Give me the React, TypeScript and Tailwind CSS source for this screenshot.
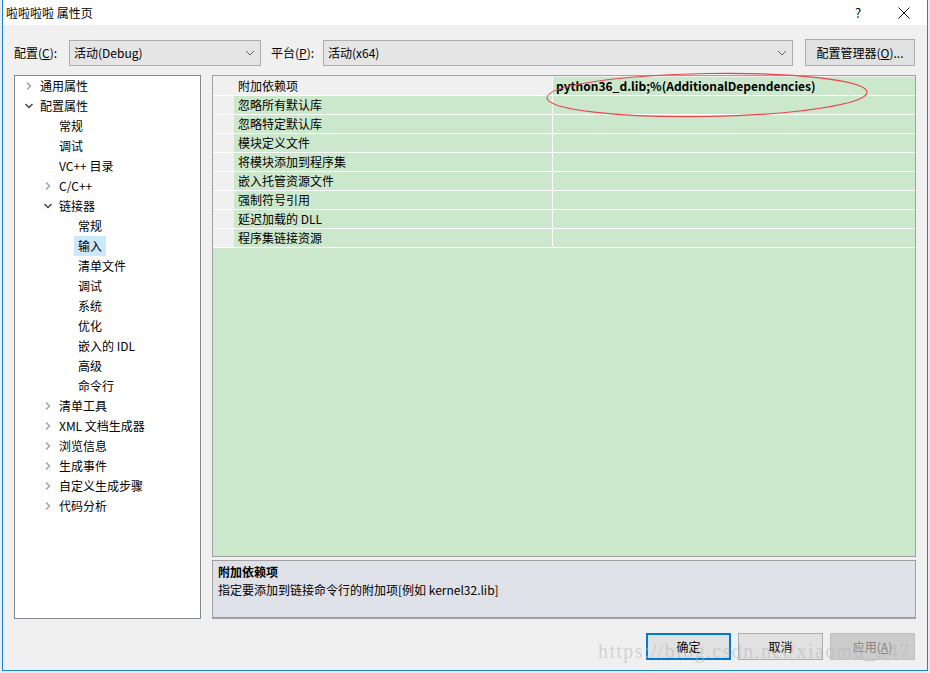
import React from 'react';

type TreeNode = {
    label: string;
    level: number;
    expander?: 'right' | 'down';
    selected?: boolean;
};

const treeNodes: TreeNode[] = [
    { label: '通用属性', level: 0, expander: 'right' },
    { label: '配置属性', level: 0, expander: 'down' },
    { label: '常规', level: 1 },
    { label: '调试', level: 1 },
    { label: 'VC++ 目录', level: 1 },
    { label: 'C/C++', level: 1, expander: 'right' },
    { label: '链接器', level: 1, expander: 'down' },
    { label: '常规', level: 2 },
    { label: '输入', level: 2, selected: true },
    { label: '清单文件', level: 2 },
    { label: '调试', level: 2 },
    { label: '系统', level: 2 },
    { label: '优化', level: 2 },
    { label: '嵌入的 IDL', level: 2 },
    { label: '高级', level: 2 },
    { label: '命令行', level: 2 },
    { label: '清单工具', level: 1, expander: 'right' },
    { label: 'XML 文档生成器', level: 1, expander: 'right' },
    { label: '浏览信息', level: 1, expander: 'right' },
    { label: '生成事件', level: 1, expander: 'right' },
    { label: '自定义生成步骤', level: 1, expander: 'right' },
    { label: '代码分析', level: 1, expander: 'right' },
];

const gridRows = [
    { name: '附加依赖项', value: 'python36_d.lib;%(AdditionalDependencies)' },
    { name: '忽略所有默认库', value: '' },
    { name: '忽略特定默认库', value: '' },
    { name: '模块定义文件', value: '' },
    { name: '将模块添加到程序集', value: '' },
    { name: '嵌入托管资源文件', value: '' },
    { name: '强制符号引用', value: '' },
    { name: '延迟加载的 DLL', value: '' },
    { name: '程序集链接资源', value: '' },
];

const paddings = ['pl-[5px]', 'pl-[24px]', 'pl-[43px]'];

const ChevronRight = () => (
    <svg width="8" height="10" viewBox="0 0 8 10">
        <path d="M2 1.5 L5.5 5 L2 8.5" fill="none" stroke="#a6a6a6" strokeWidth="1.6" />
    </svg>
);

const ChevronDown = () => (
    <svg width="10" height="8" viewBox="0 0 10 8">
        <path d="M1.5 2 L5 5.5 L8.5 2" fill="none" stroke="#404040" strokeWidth="1.4" />
    </svg>
);

const ComboChevron = () => (
    <svg width="10" height="6" viewBox="0 0 10 6">
        <path d="M1 1 L5 5 L9 1" fill="none" stroke="#606060" strokeWidth="1" />
    </svg>
);

const ComboBox: React.FC<{ text: string; className: string }> = ({ text, className }) => (
    <div className={`h-[26px] flex items-center justify-between bg-[#e5e5e5] border border-[#adadad] pl-[4px] pr-[5px] ${className}`}>
        <span>{text}</span>
        <ComboChevron />
    </div>
);

export default function App() {
    return (
        <div
            className="relative w-[930px] h-[673px] bg-[#e6edf2] text-[12px] text-black overflow-hidden"
            style={{ fontFamily: '"Noto Sans CJK SC", "Noto Sans", sans-serif' }}
        >
            <div className="ml-[2px] w-[926px] h-[671px] flex flex-col border-x border-b border-[#1883d7]">
                {/* title bar */}
                <div className="h-[25px] bg-white flex items-center justify-between">
                    <span className="pl-[3px] leading-none">啦啦啦啦 属性页</span>
                    <div className="flex h-full">
                        <div className="w-[46px] flex items-center justify-center text-[13px]">?</div>
                        <div className="w-[46px] flex items-center justify-center">
                            <svg width="12" height="12" viewBox="0 0 12 12">
                                <path d="M0.5 0.5 L11.5 11.5 M11.5 0.5 L0.5 11.5" stroke="#111" strokeWidth="1" />
                            </svg>
                        </div>
                    </div>
                </div>

                {/* body */}
                <div className="flex-1 bg-[#f0f0f0] flex flex-col pt-[14px] pl-[11px] pr-[11px] pb-[10px]">
                    {/* config row */}
                    <div className="h-[27px] flex items-center">
                        <span className="w-[55px]">配置(<span className="underline">C</span>):</span>
                        <ComboBox text="活动(Debug)" className="w-[192px]" />
                        <span className="ml-[10px] w-[52px]">平台(<span className="underline">P</span>):</span>
                        <ComboBox text="活动(x64)" className="w-[470px]" />
                        <div className="ml-[12px] w-[110px] h-[27px] flex items-center justify-center bg-[#e1e1e1] border border-[#adadad]">
                            配置管理器(<span className="underline">O</span>)...
                        </div>
                    </div>

                    {/* main area */}
                    <div className="mt-[9px] h-[544px] flex">
                        {/* tree */}
                        <div className="w-[187px] h-full bg-white border border-[#828790]">
                            {treeNodes.map((n, i) => (
                                <div key={i} className={`h-[20px] flex items-center ${paddings[n.level]}`}>
                                    <span className="w-[17px] flex items-center justify-center">
                                        {n.expander === 'right' && <ChevronRight />}
                                        {n.expander === 'down' && <ChevronDown />}
                                    </span>
                                    <span
                                        className={`ml-[-1px] px-[4px] h-[20px] leading-[20px] ${n.selected ? 'bg-[#cce8ff]' : ''}`}
                                    >
                                        {n.label}
                                    </span>
                                </div>
                            ))}
                        </div>

                        {/* property panel */}
                        <div className="ml-[11px] w-[704px] h-full flex flex-col">
                            <div className="h-[482px] border border-[#a0a0a0] bg-[#cbe8cc] flex flex-col">
                                <div className="h-[1px] bg-[#f0f0f0]" />
                                {gridRows.map((r, i) => (
                                    <div key={i} className="h-[19px] flex border-b border-white">
                                        <div className="w-[21px] bg-[#f0f0f0]" />
                                        <div
                                            className={`w-[318px] pl-[4px] leading-[18px] ${i === 0 ? 'bg-[#f0f0f0]' : ''}`}
                                        >
                                            {r.name}
                                        </div>
                                        <div className="w-[1px] bg-white" />
                                        <div className="flex-1 pl-[3px] leading-[18px] font-bold">{r.value}</div>
                                    </div>
                                ))}
                            </div>
                            <div className="mt-[3px] h-[59px] border-x border-t border-b-2 border-[#a0a0a0] bg-[#dfe1e8] pl-[5px] pt-[2px] leading-[18px]">
                                <div className="font-bold">附加依赖项</div>
                                <div>指定要添加到链接命令行的附加项[例如 kernel32.lib]</div>
                            </div>
                        </div>
                    </div>

                    {/* dialog buttons */}
                    <div className="mt-[14px] h-[27px] flex justify-end gap-[7px] pr-[1px]">
                        <div className="w-[85px] h-[27px] flex items-center justify-center bg-[#e1e1e1] border-2 border-[#0078d7]">
                            确定
                        </div>
                        <div className="w-[85px] h-[27px] flex items-center justify-center bg-[#e1e1e1] border border-[#adadad]">
                            取消
                        </div>
                        <div className="w-[85px] h-[27px] flex items-center justify-center bg-[#cccccc] border border-[#bfbfbf] text-[#838383]">
                            应用(<span className="underline">A</span>)
                        </div>
                    </div>
                </div>
            </div>

            {/* red annotation ellipse */}
            <svg className="absolute left-[545px] top-[71px]" width="326" height="50" viewBox="0 0 326 50">
                <ellipse
                    cx="162"
                    cy="24"
                    rx="160"
                    ry="21.5"
                    fill="none"
                    stroke="#e8474a"
                    strokeWidth="1.2"
                    transform="rotate(-1 162 24)"
                />
            </svg>

            {/* watermark */}
            <div
                className="absolute left-[598px] top-[641px] text-[20px] leading-none tracking-[1.4px] text-[#b4b4b4]/50 pointer-events-none whitespace-nowrap"
                style={{ fontFamily: '"Liberation Serif", serif' }}
            >
                https://blog.csdn.net/xiaomu_347
            </div>
        </div>
    );
}
